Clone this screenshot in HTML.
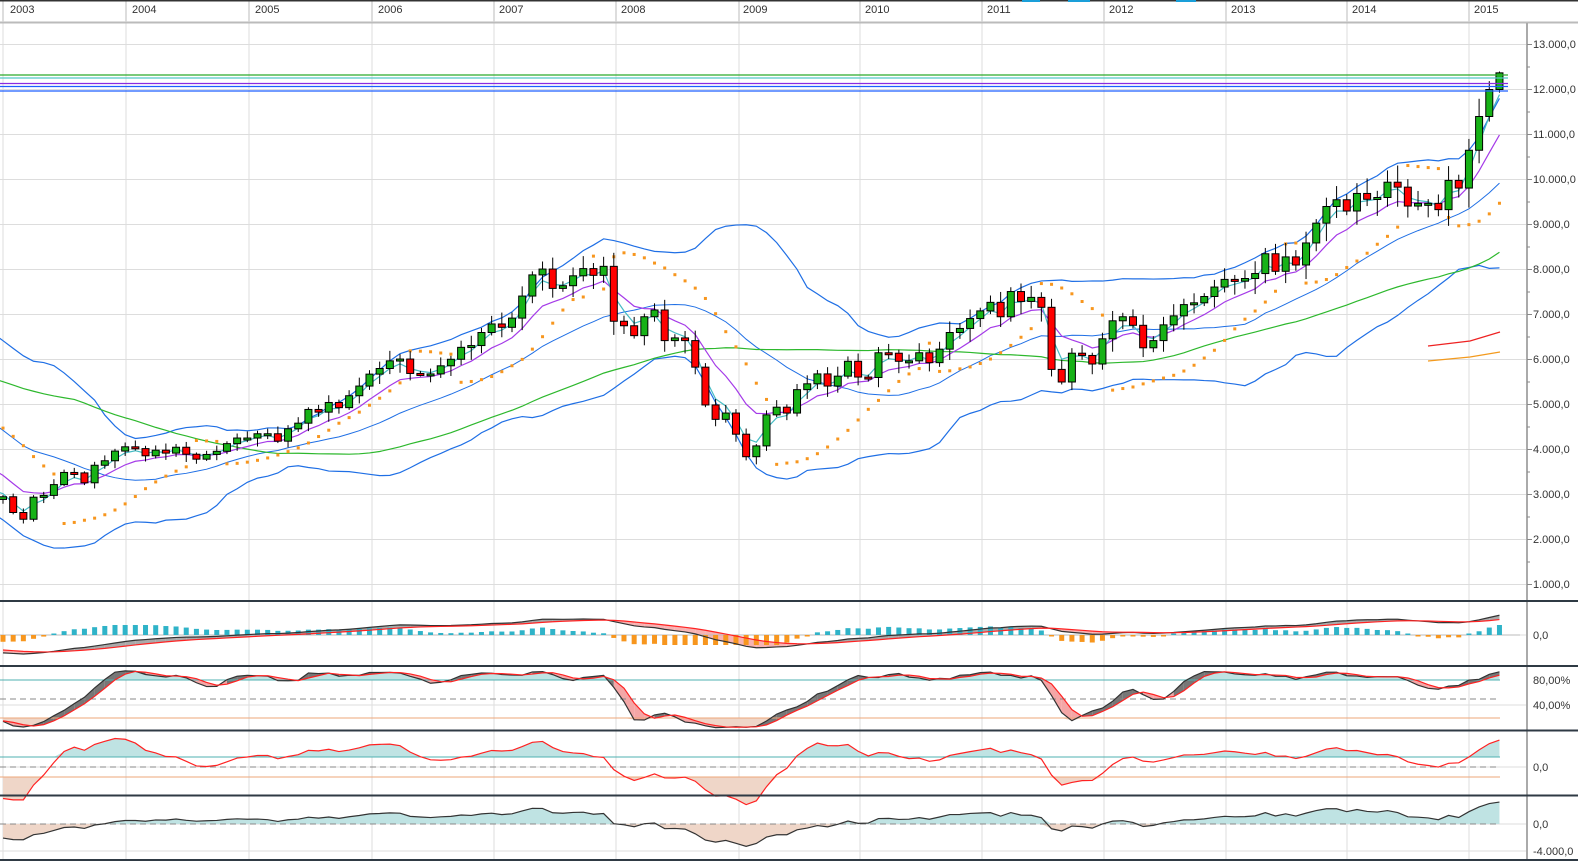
<!DOCTYPE html>
<html><head><meta charset="utf-8"><style>
html,body{margin:0;padding:0;background:#fff;width:1578px;height:861px;overflow:hidden}
svg{display:block;font-family:"Liberation Sans",sans-serif}
</style></head><body>
<svg id="s" width="1578" height="861" xmlns="http://www.w3.org/2000/svg">
<rect width="1578" height="861" fill="#fff"/>
<g id="grid"></g>
<g id="plot"></g>
<line x1="0" y1="0.5" x2="1578" y2="0.5" stroke="#333" stroke-width="2"/>
<line x1="0" y1="22.5" x2="1578" y2="22.5" stroke="#bbb" stroke-width="2"/>
<g font-size="11" fill="#333">
<text x="10" y="13">2003</text><text x="132" y="13">2004</text><text x="255" y="13">2005</text><text x="378" y="13">2006</text><text x="499" y="13">2007</text><text x="621" y="13">2008</text><text x="743" y="13">2009</text><text x="865" y="13">2010</text><text x="987" y="13">2011</text><text x="1109" y="13">2012</text><text x="1231" y="13">2013</text><text x="1352" y="13">2014</text><text x="1474" y="13">2015</text>
</g>
<g stroke="#1a9fd9" stroke-width="2"><line x1="1022" y1="1" x2="1040" y2="1"/><line x1="1068" y1="1" x2="1090" y2="1"/><line x1="1176" y1="1" x2="1196" y2="1"/></g>
<line x1="1527" y1="23" x2="1527" y2="861" stroke="#aaa" stroke-width="2"/>
<g font-size="11" fill="#333">
<text x="1533" y="48">13.000,0</text><text x="1533" y="93">12.000,0</text><text x="1533" y="138">11.000,0</text><text x="1533" y="183">10.000,0</text><text x="1533" y="228">9.000,0</text><text x="1533" y="273">8.000,0</text><text x="1533" y="318">7.000,0</text><text x="1533" y="363">6.000,0</text><text x="1533" y="408">5.000,0</text><text x="1533" y="453">4.000,0</text><text x="1533" y="498">3.000,0</text><text x="1533" y="543">2.000,0</text><text x="1533" y="588">1.000,0</text>
<text x="1533" y="639">0,0</text>
<text x="1533" y="684">80,00%</text><text x="1533" y="709">40,00%</text>
<text x="1533" y="771">0,0</text>
<text x="1533" y="828">0,0</text><text x="1533" y="855">-4.000,0</text>
</g>
<g stroke="#888" id="ticks"></g>
<g stroke="#2f3a44" stroke-width="2"><line x1="0" y1="601" x2="1578" y2="601"/><line x1="0" y1="666" x2="1578" y2="666"/><line x1="0" y1="730.5" x2="1578" y2="730.5"/><line x1="0" y1="795.5" x2="1578" y2="795.5"/><line x1="0" y1="860" x2="1578" y2="860"/></g>
</svg>
<script>
var C=[6835,7644,7599,7414,7109,6898,7190,7186,6798,7077,6372,6433,
6300,6200,5830,6260,6120,6060,5860,5190,4310,4560,5100,5160,
5110,5040,5400,5040,4820,4380,3700,3710,2770,3150,3320,2890,
2950,2600,2450,2940,2980,3220,3490,3480,3260,3650,3750,3965,
4060,4020,3860,3985,3920,4050,3895,3785,3890,3960,4130,4255,
4255,4350,4350,4185,4460,4585,4890,4830,5045,4930,5195,5410,
5675,5800,5970,6010,5690,5680,5680,5860,6005,6270,6310,6600,
6790,6715,6920,7410,7880,8010,7580,7640,7860,8020,7870,8070,
6850,6750,6530,6950,7100,6420,6480,6420,5830,4990,4670,4810,
4340,3840,4080,4770,4940,4810,5330,5460,5680,5410,5630,5960,
5610,5600,6150,6140,5960,5970,6150,5930,6230,6600,6690,6910,
7080,7270,6950,7510,7290,7380,7160,5780,5500,6140,6090,5900,
6460,6860,6950,6760,6260,6420,6770,6970,7220,7260,7400,7610,
7780,7740,7800,7910,8350,7960,8280,8100,8590,9030,9400,9550,
9300,9690,9560,9600,9940,9830,9410,9470,9470,9330,9980,9810,
10650,11400,12000,12370];
var OFF=36;
var N=C.length,O=[],H=[],L=[];
for(var i=0;i<N;i++){var o=i?C[i-1]:C[0]*1.02;O.push(o);var hi=Math.max(o,C[i]),lo=Math.min(o,C[i]);var r=(i*37%11)/11;H.push(hi+hi*(0.01+0.03*r));L.push(lo-lo*(0.01+0.04*((i*53%7)/7)));}
H[N-1]=12400;L[N-1]=11930;
function X(i){return 3+(i-OFF)*10.18}
function Y(v){return 44.5+(13000-v)*0.045}
var out=[],sub=[],g=[];
for(var yv=1000;yv<=13000;yv+=1000)g.push('<line x1="0" x2="1527" y1="'+Y(yv)+'" y2="'+Y(yv)+'" stroke="#ddd"/>');
var yrx=[3,126,249,372,494,616,739,860,982,1104,1226,1347,1469];
yrx.forEach(function(x){g.push('<line x1="'+x+'" x2="'+x+'" y1="0" y2="860" stroke="#ddd"/>');});
yrx.forEach(function(x){g.push('<line x1="'+x+'" x2="'+x+'" y1="0" y2="21" stroke="#bbb"/>');});
[635,705,767,824,851].forEach(function(y){g.push('<line x1="0" x2="1527" y1="'+y+'" y2="'+y+'" stroke="#ddd"/>');});
document.getElementById('grid').innerHTML=g.join('');
function sma(a,n,i){var s=0;for(var k=i-n+1;k<=i;k++)s+=a[k];return s/n}
function ema(a,n){var k=2/(n+1),r=[a[0]];for(var i=1;i<a.length;i++)r.push(a[i]*k+r[i-1]*(1-k));return r}
function poly(pts,col,w){return '<polyline fill="none" stroke="'+col+'" stroke-width="'+(w||1.2)+'" points="'+pts.join(' ')+'"/>'}
var s0=OFF-2;
var up=[],mid=[],lo=[],m40=[];
for(i=s0;i<N;i++){var n=Math.min(i+1,20);var m=sma(C,n,i),v=0;for(var k=i-n+1;k<=i;k++)v+=(C[k]-m)*(C[k]-m);var sd=Math.sqrt(v/n);
up.push(X(i)+','+Y(m+2*sd));lo.push(X(i)+','+Y(m-2*sd));mid.push(X(i)+','+Y(m));
m40.push(X(i)+','+Y(sma(C,Math.min(i+1,44),i)));}
out.push(poly(up,'#1f6fe5'),poly(lo,'#1f6fe5'),poly(mid,'#1f6fe5',1),poly(m40,'#2db82d'));
var e3=ema(C,3),e8=ema(C,8),p3=[],p8=[];
for(i=s0;i<N;i++){p3.push(X(i)+','+Y(e3[i]));p8.push(X(i)+','+Y(e8[i]));}
out.push(poly(p8,'#a53be8'),poly(p3,'#46bcc4'));
out.push('<polyline fill="none" stroke="#e22" stroke-width="1.2" points="1428,346 1470,341 1500,332"/>');
out.push('<polyline fill="none" stroke="#f39a1e" stroke-width="1.2" points="1428,361 1470,357 1500,352"/>');
var up1=true,af=0.02,ep=H[0],sar=L[0],dots=[];
for(i=1;i<N;i++){sar=sar+af*(ep-sar);
 if(up1){sar=Math.min(sar,L[i-1]);if(L[i]<sar){up1=false;sar=ep;ep=L[i];af=0.02;}else if(H[i]>ep){ep=H[i];af=Math.min(af+0.02,0.2);}}
 else{sar=Math.max(sar,H[i-1]);if(H[i]>sar){up1=true;sar=ep;ep=H[i];af=0.02;}else if(L[i]<ep){ep=L[i];af=Math.min(af+0.02,0.2);}}
 if(i>=OFF)dots.push('<rect x="'+(X(i)-1.5)+'" y="'+(Y(sar)-1.5)+'" width="3" height="3" fill="#f7961e"/>');}
out.push(dots.join(''));
for(i=OFF;i<N;i++){var x=X(i),gr=C[i]>=O[i];var t=Y(Math.max(C[i],O[i])),b=Y(Math.min(C[i],O[i]));if(b-t<2)b=t+2;
out.push('<line x1="'+x+'" x2="'+x+'" y1="'+Y(H[i])+'" y2="'+Y(L[i])+'" stroke="#000"/>');
out.push('<rect x="'+(x-3.5)+'" y="'+t+'" width="7" height="'+(b-t)+'" fill="'+(gr?'#17b217':'#f00')+'" stroke="#000" stroke-width="1"/>');}
[[75,'#2aaa2a'],[78,'#55c8c8'],[83.5,'#8a2be2'],[86.5,'#1f5fff'],[91,'#1f5fff']].forEach(function(a){out.push('<line x1="0" x2="1508" y1="'+a[0]+'" y2="'+a[0]+'" stroke="'+a[1]+'" stroke-width="1.3"/>');});
var e12=ema(C,12),e26=ema(C,26),mac=[],sig;for(i=0;i<N;i++)mac.push(e12[i]-e26[i]);sig=ema(mac,9);
function YM(v){return 635-v*0.021}
for(i=OFF;i<N-1;i++){var col=mac[i]>=sig[i]?'#aaa':'#f7b3b3';sub.push('<polygon fill="'+col+'" points="'+X(i)+','+YM(mac[i])+' '+X(i+1)+','+YM(mac[i+1])+' '+X(i+1)+','+YM(sig[i+1])+' '+X(i)+','+YM(sig[i])+'"/>');}
sub.push('<line x1="0" x2="1520" y1="635" y2="635" stroke="#bbb"/>');
for(i=OFF;i<N;i++){var h=(mac[i]-sig[i])*0.05;var hh=Math.min(Math.max(Math.abs(h),1.5),10);sub.push('<rect x="'+(X(i)-2.5)+'" y="'+(h>0?635-hh:635)+'" width="5" height="'+hh+'" fill="'+(h>0?'#2fb3c8':'#f7961e')+'"/>');}
var pm=[],ps=[];for(i=OFF;i<N;i++){pm.push(X(i)+','+YM(mac[i]));ps.push(X(i)+','+YM(sig[i]));}
sub.push(poly(pm,'#333'),poly(ps,'#f22'));
var K=[],D=[];for(i=0;i<N;i++){var hh2=-1e9,ll=1e9;for(k=Math.max(0,i-13);k<=i;k++){hh2=Math.max(hh2,H[k]);ll=Math.min(ll,L[k]);}K.push((C[i]-ll)/(hh2-ll)*100);}
var Ks=[];for(i=0;i<N;i++)Ks.push(sma(K,Math.min(i+1,3),i));for(i=0;i<N;i++)D.push(sma(Ks,Math.min(i+1,3),i));
function YS(v){return 730-v*0.625}
function band(arr,f,ref,above,col){var p=[];for(var i=OFF;i<N;i++){var y=f(arr[i]);y=above?Math.min(y,ref):Math.max(y,ref);p.push(X(i)+','+y);}p.push(X(N-1)+','+ref,X(OFF)+','+ref);return '<polygon fill="'+col+'" points="'+p.join(' ')+'"/>'}
sub.push(band(Ks,YS,680,true,'#bfe3e3'),band(Ks,YS,718,false,'#efd6c8'));
for(i=OFF;i<N-1;i++){sub.push('<polygon fill="'+(Ks[i]>=D[i]?'#777':'#f4a6a6')+'" points="'+X(i)+','+YS(Ks[i])+' '+X(i+1)+','+YS(Ks[i+1])+' '+X(i+1)+','+YS(D[i+1])+' '+X(i)+','+YS(D[i])+'"/>');}
sub.push('<line x1="0" x2="1500" y1="680" y2="680" stroke="#4fb0b0"/><line x1="0" x2="1500" y1="699" y2="699" stroke="#888" stroke-dasharray="6,4"/><line x1="0" x2="1500" y1="718" y2="718" stroke="#eea77a"/>');
var pk=[],pd=[];for(i=OFF;i<N;i++){pk.push(X(i)+','+YS(Ks[i]));pd.push(X(i)+','+YS(D[i]));}
sub.push(poly(pk,'#333'),poly(pd,'#f22'));
var R0=[];for(i=0;i<N;i++){R0.push(C[i]/sma(C,Math.min(i+1,10),i)-1);}var R=ema(R0,3);
function YR(v){return 765-v*150}
sub.push(band(R,YR,757,true,'#bfe3e3'),band(R,YR,777,false,'#efd6c8'));
sub.push('<line x1="0" x2="1500" y1="757" y2="757" stroke="#4fb0b0"/><line x1="0" x2="1500" y1="767" y2="767" stroke="#888" stroke-dasharray="6,4"/><line x1="0" x2="1500" y1="777" y2="777" stroke="#eea77a"/>');
var pr=[];for(i=OFF;i<N;i++)pr.push(X(i)+','+YR(R[i]));sub.push(poly(pr,'#f22'));
var Q=[];for(i=0;i<N;i++)Q.push(C[i]-sma(C,Math.min(i+1,24),i));
function YQ(v){return 824-v*0.008}
sub.push(band(Q,YQ,824,true,'#bfe3e3'),band(Q,YQ,824,false,'#efd6c8'));
sub.push('<line x1="0" x2="1500" y1="824" y2="824" stroke="#888" stroke-dasharray="6,4"/>');
var pq=[];for(i=OFF;i<N;i++)pq.push(X(i)+','+YQ(Q[i]));sub.push(poly(pq,'#333'));
document.getElementById('plot').innerHTML='<defs><clipPath id="c1"><rect x="0" y="23" width="1527" height="577"/></clipPath><clipPath id="c2"><rect x="0" y="602" width="1527" height="258"/></clipPath></defs><g clip-path="url(#c1)">'+out.join('')+'</g><g clip-path="url(#c2)">'+sub.join('')+'</g>';
var t=[];for(var yy=44.5;yy<600;yy+=22.5)t.push('<line x1="1527" x2="'+(Math.round((yy-44.5)/22.5)%2?1530:1532)+'" y1="'+yy+'" y2="'+yy+'"/>');
document.getElementById('ticks').innerHTML=t.join('');
</script>
</body></html>
